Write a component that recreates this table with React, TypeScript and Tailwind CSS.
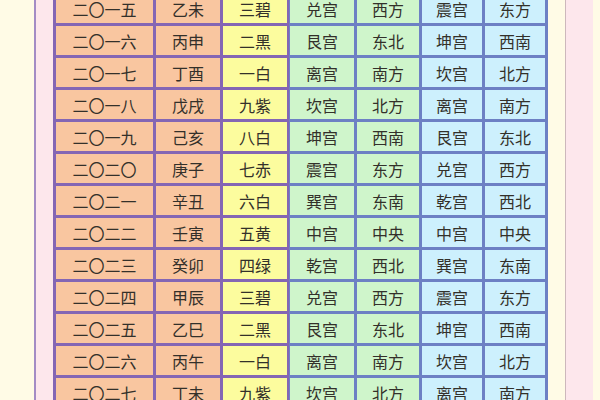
const rows: string[][] = [
  ['二〇一五', '乙未', '三碧', '兑宫', '西方', '震宫', '东方'],
  ['二〇一六', '丙申', '二黑', '艮宫', '东北', '坤宫', '西南'],
  ['二〇一七', '丁酉', '一白', '离宫', '南方', '坎宫', '北方'],
  ['二〇一八', '戊戌', '九紫', '坎宫', '北方', '离宫', '南方'],
  ['二〇一九', '己亥', '八白', '坤宫', '西南', '艮宫', '东北'],
  ['二〇二〇', '庚子', '七赤', '震宫', '东方', '兑宫', '西方'],
  ['二〇二一', '辛丑', '六白', '巽宫', '东南', '乾宫', '西北'],
  ['二〇二二', '壬寅', '五黄', '中宫', '中央', '中宫', '中央'],
  ['二〇二三', '癸卯', '四绿', '乾宫', '西北', '巽宫', '东南'],
  ['二〇二四', '甲辰', '三碧', '兑宫', '西方', '震宫', '东方'],
  ['二〇二五', '乙巳', '二黑', '艮宫', '东北', '坤宫', '西南'],
  ['二〇二六', '丙午', '一白', '离宫', '南方', '坎宫', '北方'],
  ['二〇二七', '丁未', '九紫', '坎宫', '北方', '离宫', '南方'],
];

const cellColors = [
  'bg-[#f9c6a0]',
  'bg-[#f9c6a0]',
  'bg-[#fcfc9e]',
  'bg-[#cff5cb]',
  'bg-[#cff5cb]',
  'bg-[#cdf0fd]',
  'bg-[#cdf0fd]',
];

export default function App() {
  return (
    <div
      className="flex h-[400px] w-[600px] overflow-hidden bg-[#fffbe6] text-[#33302a]"
      style={{ fontFamily: '"Noto Sans CJK SC", "Noto Sans", sans-serif' }}
    >
      <div className="w-[34px] shrink-0 bg-[#fffbe6]" />
      <div className="w-[2px] shrink-0 bg-[#a48cc4]" />
      <div className="w-[17px] shrink-0 bg-[#fde7ec]" />

      <div className="-mt-[9px] w-[495px] shrink-0 self-start bg-[linear-gradient(to_right,#8466b4_0,#8466b4_47.6%,#6d80c4_47.6%,#6d80c4_100%)] p-[3px]">
        <div className="grid grid-cols-[97px_64px_64px_64px_62px_60px_60px] gap-[3px]">
          {rows.map((row, r) =>
            row.map((text, c) => (
              <div
                key={`${r}-${c}`}
                className={`flex h-[29px] items-center justify-center text-[16px] leading-none ${cellColors[c]}`}
              >
                {text}
              </div>
            ))
          )}
        </div>
      </div>

      <div className="w-[17px] shrink-0 bg-[#fffbe6]" />
      <div className="w-[1px] shrink-0 bg-[#cdb8bc]" />
      <div className="w-[27px] shrink-0 bg-[#fde7ec]" />
      <div className="flex-1 bg-[#fffbe6]" />
    </div>
  );
}
